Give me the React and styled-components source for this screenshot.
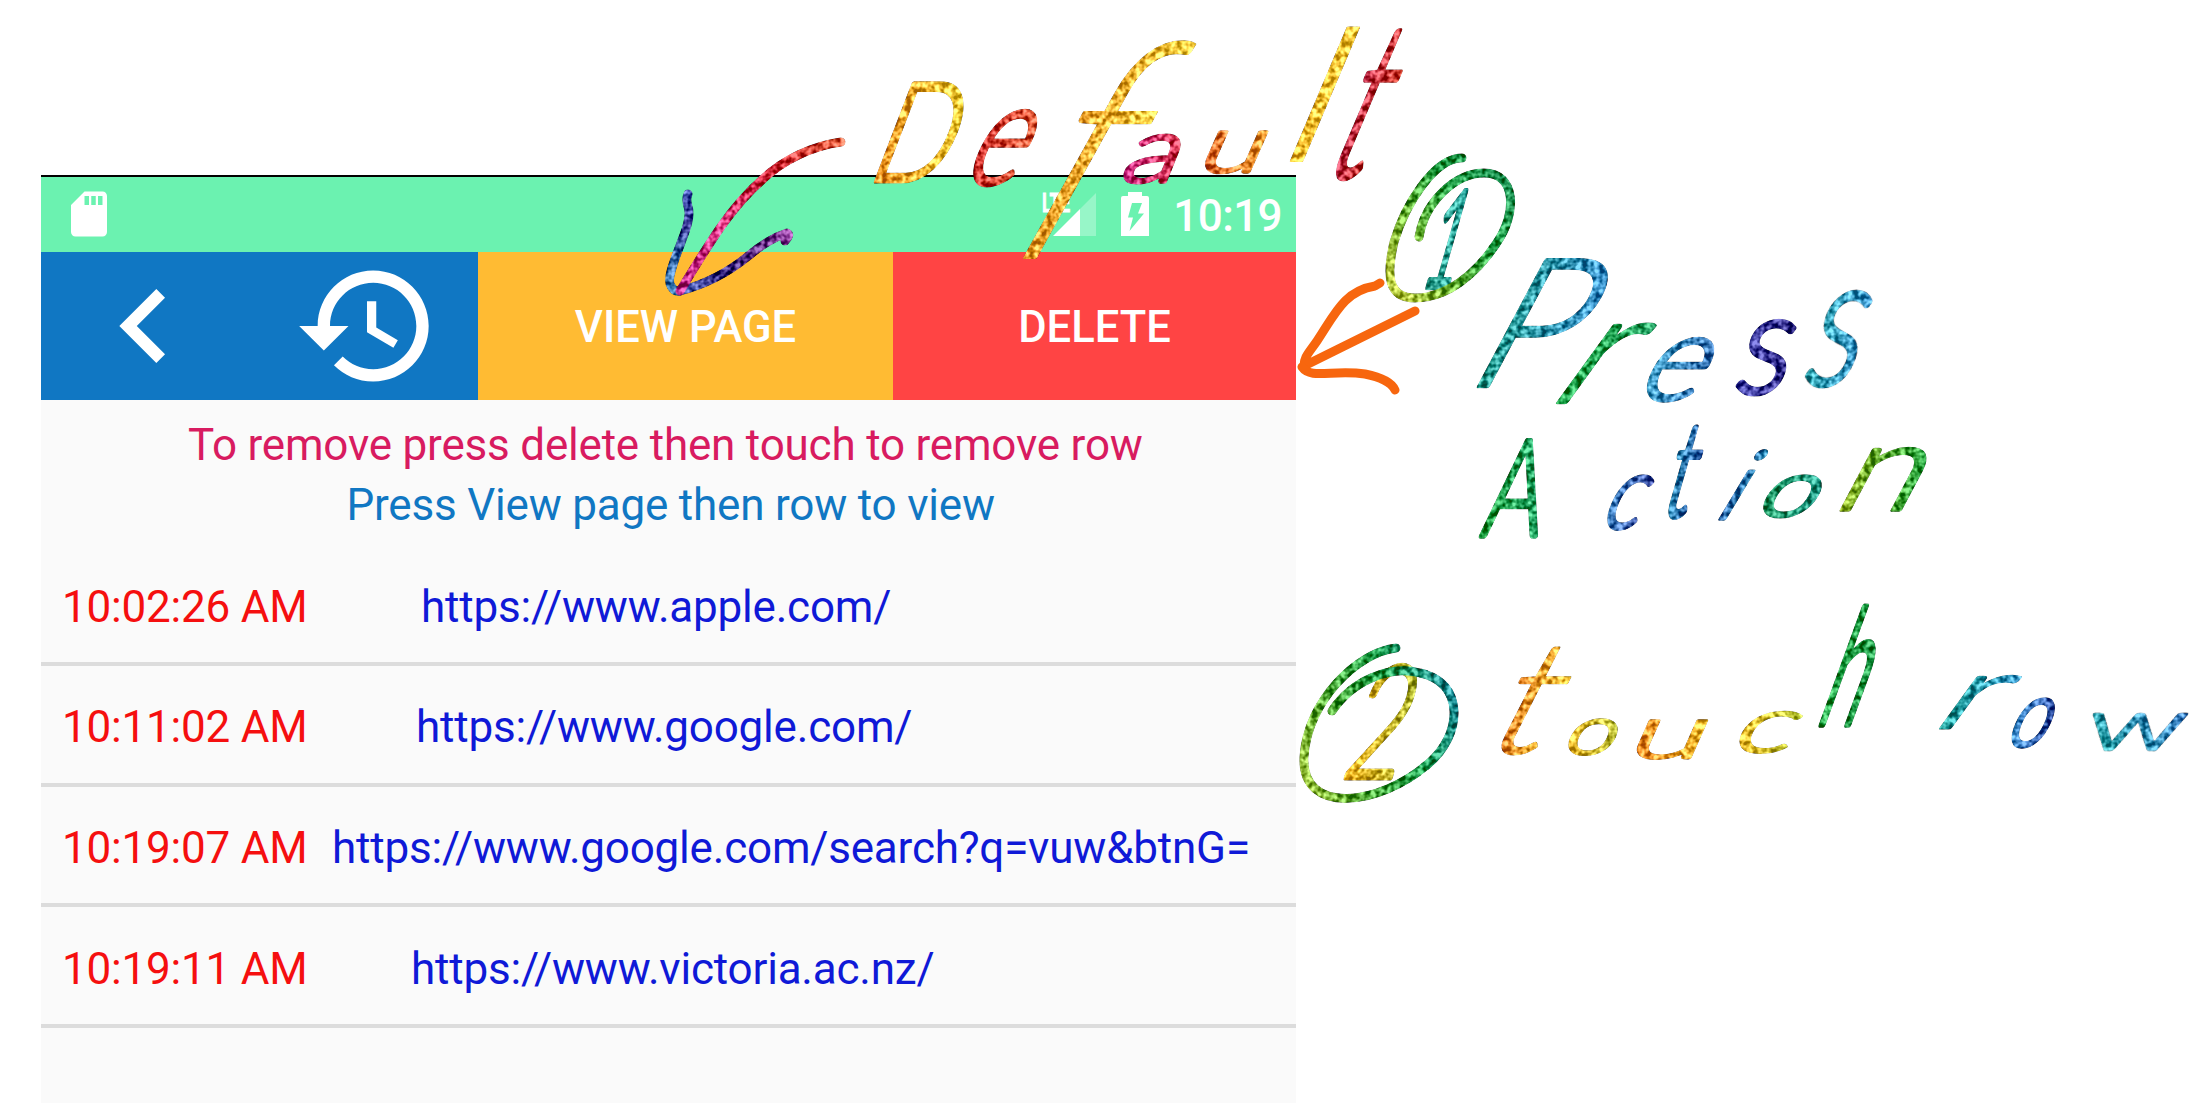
import React, { useMemo } from "react";
import styled, { createGlobalStyle } from "styled-components";

const Global = createGlobalStyle`
  * { box-sizing: border-box; }
  body { margin: 0; background: #fff; overflow: hidden; font-family: Roboto, sans-serif; }
`;

const Page = styled.main`
  position: relative;
  width: 2206px;
  height: 1103px;
  padding: 175px 0 0 41px;
  overflow: hidden;
  background: #fff;
`;

const Phone = styled.section`
  width: 1255px;
  height: 928px;
  display: flex;
  flex-direction: column;
  background: #fafafa;
  border-top: 2px solid #000;
`;

const StatusBar = styled.header`
  flex: none;
  display: flex;
  align-items: center;
  height: 74.6px;
  padding: 0 14px 0 21px;
  background: #6bf2b0;
  color: #fff;
`;

const SdIcon = styled.svg`
  width: 54px;
  height: 54px;
  fill: currentColor;
`;

const SignalIcon = styled.svg`
  width: 54px;
  height: 46px;
  margin-left: auto;
  overflow: visible;
`;

const BatteryIcon = styled.svg`
  width: 30px;
  height: 46px;
  margin: 0 23px 0 24px;
`;

const Clock = styled.time`
  font-size: 44px;
  line-height: 52px;
  letter-spacing: -0.6px;
  font-weight: 500;
  padding-top: 4px;
`;

const Toolbar = styled.nav`
  flex: none;
  display: grid;
  grid-template-columns: 437px 415px 1fr;
  height: 148px;
`;

const NavGroup = styled.div`
  display: flex;
  gap: 75px;
  padding-left: 29px;
  background: #1077c3;
`;

const NavIcon = styled.svg`
  width: 148px;
  height: 148px;
  fill: #fff;
`;

const ActionButton = styled.button`
  border: 0;
  padding: 5px 0 0;
  background: ${(p) => p.$tone};
  color: #fff;
  font: 500 43.5px/52px Roboto, sans-serif;
  text-transform: uppercase;
`;

const Hints = styled.div`
  flex: none;
  height: 146px;
  padding-top: 15px;
`;

const Hint = styled.p`
  margin: 0 0 0 ${(p) => p.$indent};
  font-size: 44px;
  line-height: 60.5px;
  letter-spacing: -0.2px;
  color: ${(p) => p.$tone};
  white-space: nowrap;
`;

const List = styled.ul`
  margin: 0;
  padding: 0;
  list-style: none;
`;

const Row = styled.li`
  display: flex;
  align-items: center;
  height: 120.6px;
  padding: 6px 0 0 21px;
  border-bottom: 4px solid #dcdcdc;
  font-size: 44px;
  line-height: 52px;
  letter-spacing: -0.2px;
  white-space: nowrap;
`;

const Time = styled.span`
  width: 248px;
  color: #f50f0f;
`;

const Url = styled.span`
  margin-left: ${(p) => p.$gap}px;
  color: #0f19d7;
`;

const Notes = styled.svg`
  position: absolute;
  inset: 0;
  width: 2206px;
  height: 1103px;
  pointer-events: none;
`;

const Pen = styled.path`
  fill: none;
  stroke: ${(p) => p.$ink};
  stroke-width: ${(p) => p.$size || 9};
  stroke-linecap: round;
  stroke-linejoin: round;
`;

const Glyph = styled.text`
  font: 300 100px Lato, sans-serif;
  stroke-linejoin: round;
`;

const SANS = "300 100px Lato, sans-serif";

const rows = [
  ["10:02:26 AM", "https://www.apple.com/", 111],
  ["10:11:02 AM", "https://www.google.com/", 106],
  ["10:19:07 AM", "https://www.google.com/search?q=vuw&btnG=", 22],
  ["10:19:11 AM", "https://www.victoria.ac.nz/", 101],
];

// [character, left, top, right, bottom, slant in degrees, start colour, end colour, pen width]
const words = [
  ["Default", [
    ["D", 874, 80, 967, 182, 21, "#e88a1c", "#f5cf3a", 4.4],
    ["e", 962, 109, 1037, 187, 26, "#c0201f", "#dc5a32", 4.2],
    ["f", 1000, 36, 1168, 259, 29, "#e28a1e", "#f5c93c", 2.5],
    ["a", 1120, 133, 1180, 184, 22, "#c01f78", "#c92a3a", 4.2],
    ["u", 1200, 129, 1263, 174, 24, "#d95f24", "#ee9a2c", 4],
    ["l", 1288, 23, 1357, 162, 23, "#f3b325", "#f5c83c", 2],
    ["t", 1320, 28, 1416, 181, 23, "#b01f46", "#cc3a2a", 4],
  ]],
  ["1", [["1", 1424, 189, 1474, 287, 16, "#10806c", "#2aa59e", 5.5]]],
  ["Press", [
    ["P", 1477, 256, 1603, 387, 28, "#15917c", "#2f86bd", 4.5],
    ["r", 1557, 322, 1643, 403, 36, "#139a3c", "#1f9a5c", 4.5],
    ["e", 1636, 337, 1715, 403, 28, "#3d9ec6", "#2e66aa", 4],
    ["s", 1733, 319, 1794, 396, 16, "#3a3aa0", "#29227e", 4.5],
    ["s", 1801, 290, 1869, 388, 18, "#2a9fa8", "#3a8fca", 4],
  ]],
  ["Action", [
    ["A", 1479, 437, 1557, 537, 12, "#149437", "#20a268", 4.5],
    ["c", 1600, 475, 1651, 531, 24, "#2f77b4", "#4150a5", 4],
    ["t", 1659, 425, 1709, 519, 16, "#258bb0", "#25559f", 4.5],
    ["i", 1716, 448, 1766, 520, 31, "#2a5aa4", "#2b8bb4", 3.5],
    ["o", 1756, 474, 1823, 518, 30, "#168c55", "#169181", 4.5],
    ["n", 1840, 446, 1926, 511, 28, "#8fae1e", "#139a3c", 4],
  ]],
  ["2", [["2", 1343, 661, 1417, 779, 16, "#eeb01e", "#a3ab26", 4]]],
  ["touch", [
    ["t", 1480, 645, 1584, 756, 27, "#dd6d1e", "#f2c133", 2.5],
    ["o", 1563, 718, 1619, 756, 24, "#efb62a", "#a5b02a"],
    ["u", 1632, 718, 1703, 760, 24, "#e8801e", "#f0bc2c"],
    ["c", 1732, 710, 1800, 754, 28, "#f0b82a", "#a8bb2a"],
    ["h", 1819, 603, 1891, 725, 20, "#1a9c3e", "#118a3a", 5],
  ]],
  ["row", [
    ["r", 1940, 674, 2013, 729, 36, "#129488", "#3392c2", 4],
    ["o", 2005, 697, 2056, 748, 24, "#3b8ecb", "#243f96"],
    ["w", 2083, 711, 2185, 751, 16, "#1e9d9d", "#3c7fc2", 3.8],
  ]],
];

const strokes = [
  // arrow to the default action
  ["M688 194C683 206 694 204 686 229C679 250 665 278 671 286Q674 292 680 291", "navy"],
  ["M680 291C710 283 731 270 747 257Q768 239 787 233Q791 235 785 241", "purple"],
  ["M841 142C812 146 783 160 763 179C732 206 713 237 680 291", "crimson"],
  // ring round the first step
  ["M1462 158C1434 158 1405 205 1394 242C1386 276 1388 298 1415 298C1447 298 1476 274 1496 244C1518 213 1516 173 1484 173C1456 173 1425 201 1419 237", "greenA"],
  // ring round the second step
  ["M1396 648C1358 652 1307 701 1304 757C1301 816 1380 806 1428 764C1463 735 1465 682 1420 673C1389 665 1352 681 1332 711", "greenB"],
];

let pen;
function inkOf(ch) {
  pen = pen || document.createElement("canvas").getContext("2d");
  pen.font = SANS;
  const m = pen.measureText(ch);
  return {
    left: -m.actualBoundingBoxLeft,
    width: m.actualBoundingBoxLeft + m.actualBoundingBoxRight,
    ascent: m.actualBoundingBoxAscent,
    descent: m.actualBoundingBoxDescent,
  };
}

function Letter({ id, data }) {
  const [ch, l, t, r, b, slant, from, to, nib = 3.8] = data;
  const fit = useMemo(() => {
    const ink = inkOf(ch);
    const tan = Math.tan((slant * Math.PI) / 180);
    const h = b - t - 3;
    const sy = h / (ink.ascent + ink.descent);
    const lean = "lthA1i".includes(ch) ? 0.9 : 0.72;
    const sx = Math.max((r - l - 3 - tan * h * lean) / ink.width, ch === "l" ? 1.1 : 0.2);
    const base = b - 1.5 - ink.descent * sy;
    const x = l + 1.5 - ink.left * sx + tan * ink.descent * sy;
    return { m: `matrix(${sx} 0 ${-tan * sy} ${sy} ${x} ${base})`, w: nib / Math.sqrt(sx * sy) };
  }, [data]);
  return (
    <>
      <linearGradient id={id} x1="0" y1="1" x2="1" y2="0.2">
        <stop offset="0.15" stopColor={from} />
        <stop offset="0.85" stopColor={to} />
      </linearGradient>
      <Glyph transform={fit.m} fill={`url(#${id})`} stroke={`url(#${id})`} strokeWidth={fit.w}>
        {ch}
      </Glyph>
    </>
  );
}

function Grad({ id, box, stops }) {
  const [x1, y1, x2, y2] = box;
  return (
    <linearGradient id={id} gradientUnits="userSpaceOnUse" x1={x1} y1={y1} x2={x2} y2={y2}>
      {stops.map((c, i) => (
        <stop key={i} offset={i / (stops.length - 1)} stopColor={c} />
      ))}
    </linearGradient>
  );
}

function Annotations() {
  return (
    <Notes viewBox="0 0 2206 1103">
      <defs>
        <Grad id="navy" box={[690, 194, 675, 290]} stops={["#3f4fae", "#25257f", "#3465a5", "#3170a8"]} />
        <Grad id="purple" box={[680, 290, 790, 235]} stops={["#3d57a8", "#251a75", "#4a1a70", "#83308f"]} />
        <Grad id="crimson" box={[841, 142, 680, 291]} stops={["#d65030", "#c51a2c", "#d42b78", "#b01b80"]} />
        <Grad id="greenA" box={[1388, 270, 1510, 190]} stops={["#a8bd35", "#57a226", "#15943a", "#118747"]} />
        <Grad id="greenB" box={[1300, 770, 1460, 710]} stops={["#8cb530", "#3f9c2c", "#0e9140", "#11828c"]} />
        <filter id="glitter" filterUnits="userSpaceOnUse" x="0" y="0" width="2206" height="1103" colorInterpolationFilters="sRGB">
          <feTurbulence type="fractalNoise" baseFrequency="0.17" numOctaves="2" seed="4" result="noise" />
          <feColorMatrix in="noise" type="matrix" values="2.4 0 0 0 -0.7  2.4 0 0 0 -0.7  2.4 0 0 0 -0.7  0 0 0 0 1" result="grain" />
          <feComposite in="SourceGraphic" in2="grain" operator="arithmetic" k1="0" k2="1" k3="0.62" k4="-0.27" result="mix" />
          <feComposite in="mix" in2="SourceGraphic" operator="in" />
        </filter>
      </defs>
      <g filter="url(#glitter)">
        {words.map(([word, letters], w) => (
          <g key={w} aria-label={word}>
            {letters.map((d, i) => (
              <Letter key={i} id={`ink-${w}-${i}`} data={d} />
            ))}
          </g>
        ))}
        {strokes.map(([d, ink], i) => (
          <Pen key={i} d={d} $ink={`url(#${ink})`} />
        ))}
      </g>
      <Pen $ink="#f7660e" d="M1380 283L1375 286C1344 291 1335 314 1317 341C1308 354 1304 357 1304 366L1415 311" />
      <Pen $ink="#f7660e" d="M1302 367C1311 380 1333 369 1365 374Q1390 379 1395 390" />
    </Notes>
  );
}

export default function App() {
  return (
    <>
      <Global />
      <Page>
        <Phone>
          <StatusBar>
            <SdIcon viewBox="0 0 24 24">
              <path d="M18 2h-8L4 8v12c0 1.1.9 2 2 2h12c1.1 0 2-.9 2-2V4c0-1.1-.9-2-2-2zm-6 6h-2V4h2v4zm3 0h-2V4h2v4zm3 0h-2V4h2v4z" />
            </SdIcon>
            <SignalIcon viewBox="0 0 54 46">
              <path d="M54 2V45H38V18z" fill="#fff" fillOpacity="0.3" />
              <path d="M11 45L38 18V45z" fill="#fff" />
              <text x="0" y="20.5" fontFamily="Roboto, sans-serif" fontWeight="700" fontSize="26" textLength="28" lengthAdjust="spacingAndGlyphs" fill="#fff" stroke="#fff" strokeWidth="0.8">LTE</text>
            </SignalIcon>
            <BatteryIcon viewBox="0 0 30 46">
              <path fill="#fff" fillRule="evenodd" d="M8 1H22V5H27Q29 5 29 7V45H1V7Q1 5 3 5H8zM12 12L8 26.500H13L9.500 40L24 22.500H18L22 12z" />
            </BatteryIcon>
            <Clock>10:19</Clock>
          </StatusBar>
          <Toolbar>
            <NavGroup>
              <NavIcon viewBox="0 0 24 24">
                <path d="M15.410 7.410L14 6l-6 6 6 6 1.410-1.410L10.830 12z" />
              </NavIcon>
              <NavIcon viewBox="0 0 24 24">
                <path d="M13 3c-4.970 0-9 4.030-9 9H1l4 3.990L9 12H6c0-3.870 3.130-7 7-7s7 3.130 7 7-3.130 7-7 7c-1.930 0-3.680-.79-4.940-2.060l-1.420 1.420C8.270 19.990 10.510 21 13 21c4.970 0 9-4.030 9-9s-4.030-9-9-9zm-1 5v5l4.280 2.540.72-1.210-3.500-2.080V8H12z" />
              </NavIcon>
            </NavGroup>
            <ActionButton $tone="#ffbb33">View page</ActionButton>
            <ActionButton $tone="#ff4444">Delete</ActionButton>
          </Toolbar>
          <Hints>
            <Hint $tone="#d81b60" $indent="147px">To remove press delete then touch to remove row</Hint>
            <Hint $tone="#1077c3" $indent="305.5px">Press View page then row to view</Hint>
          </Hints>
          <List>
            {rows.map(([time, url, gap]) => (
              <Row key={time}>
                <Time>{time}</Time>
                <Url $gap={gap}>{url}</Url>
              </Row>
            ))}
          </List>
        </Phone>
        <Annotations />
      </Page>
    </>
  );
}
